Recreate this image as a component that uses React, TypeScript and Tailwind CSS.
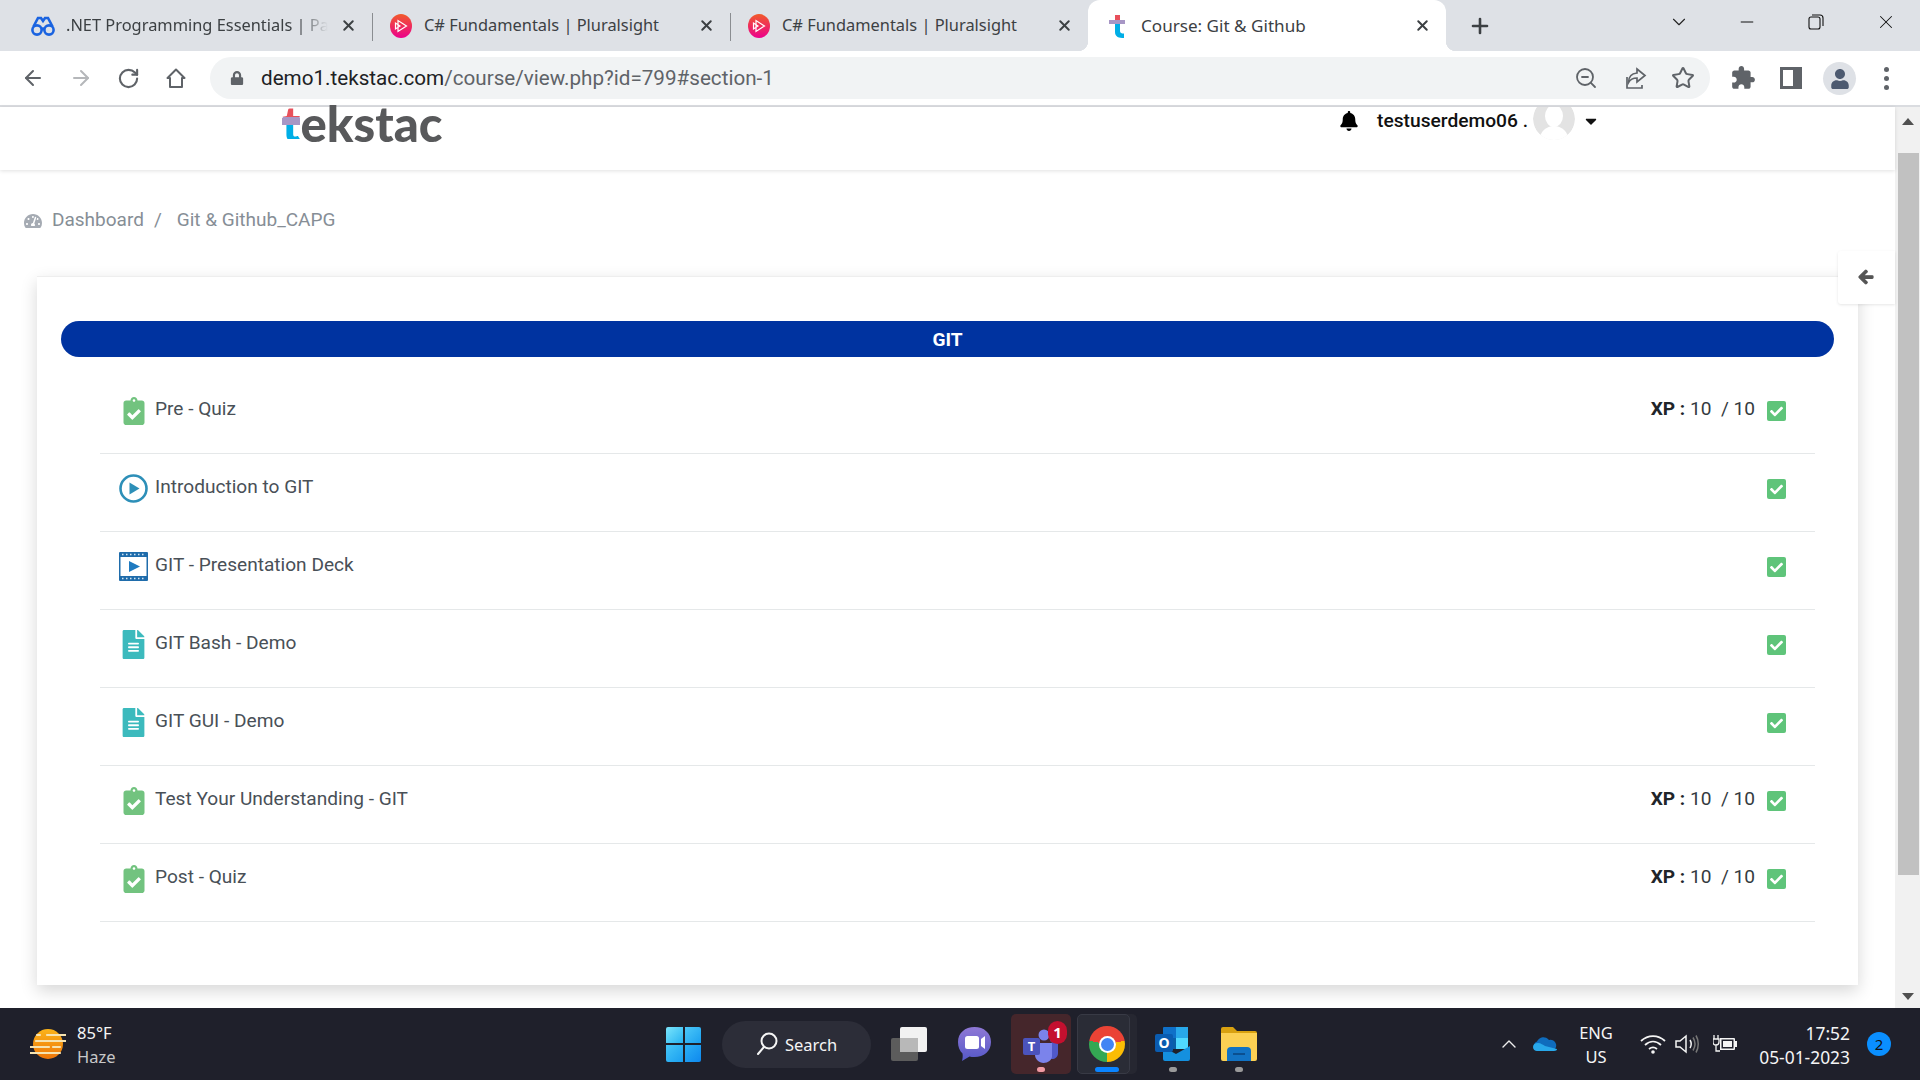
import React from 'react';
import { ArrowLeft, ArrowRight, RotateCw, ZoomOut, Star, ChevronUp, ChevronDown, Minus, X, Plus } from 'lucide-react';
import {
  FaArrowLeft,
  FaBell,
  FaCaretDown,
  FaCheck,
  FaClipboardCheck,
  FaFileAlt,
  FaLock,
  FaTachometerAlt,
  FaUser,
} from 'react-icons/fa';

const roboto = { fontFamily: 'Roboto, sans-serif' };

const GlassesIcon = () => (
  <svg width="24" height="22" viewBox="0 0 24 22" fill="none" stroke="#1a63e0" strokeWidth="2.600" className="-mx-px shrink-0">
    <circle cx="6" cy="15" r="4.600" />
    <circle cx="18" cy="15" r="4.600" />
    <path d="M10.500 14.500c1-1 2-1 3 0M2.500 11.500L7 3h3l2 3 2-3h3l4.500 8.500" />
  </svg>
);

const PluralsightIcon = () => (
  <svg width="22" height="24" viewBox="0 0 22 24" className="shrink-0">
    <defs>
      <linearGradient id="ps" x1="0" y1="0" x2="0" y2="1">
        <stop offset="0" stopColor="#f15b2a" />
        <stop offset="1" stopColor="#ec008c" />
      </linearGradient>
    </defs>
    <ellipse cx="11" cy="12" rx="11" ry="12" fill="url(#ps)" />
    <path d="M8 6.500v11l8.500-5.500zM5.500 9v6l4.500-3z" fill="none" stroke="#fff" strokeWidth="1.200" />
  </svg>
);

const TekstacIcon = () => (
  <svg width="22" height="24" viewBox="0 0 22 24" className="shrink-0">
    <path d="M8 1h5v5H8z" fill="#e8505b" />
    <path d="M8 10h5v7c0 2 1.500 2.500 4 2.500V24c-5 0-9-1-9-6z" fill="#00aee6" />
    <path d="M2 6h16v4H2z" fill="#a796c5" />
  </svg>
);

const tabs = [
  { title: '.NET Programming Essentials | Pa', icon: <GlassesIcon />, fade: true },
  { title: 'C# Fundamentals | Pluralsight', icon: <PluralsightIcon />, sep: true },
  { title: 'C# Fundamentals | Pluralsight', icon: <PluralsightIcon />, sep: true },
];

const Tab = ({ title, icon, fade, sep, active }: { title: string; icon: React.ReactNode; fade?: boolean; sep?: boolean; active?: boolean }) => (
  <div className={`relative flex h-full w-[358px] items-center gap-3 pl-[18px] pr-[15px] ${active ? 'rounded-t-[12px] bg-white' : ''}`}>
    {sep && <div className="absolute left-0 top-[13px] h-[28px] w-px bg-[#8a8d91]" />}
    {active && <div className="absolute bottom-0 -left-[10px] h-[10px] w-[10px] bg-[radial-gradient(circle_at_0_0,#dee1e6_10px,#ffffff_10.5px)]" />}
    {active && <div className="absolute bottom-0 -right-[10px] h-[10px] w-[10px] bg-[radial-gradient(circle_at_100%_0,#dee1e6_10px,#ffffff_10.5px)]" />}
    <div className={`flex w-[22px] shrink-0 justify-center ${active ? 'translate-x-[1px]' : ''}`}>{icon}</div>
    <div
      className={`min-w-0 flex-1 whitespace-nowrap font-['Noto_Sans',sans-serif] text-[#3c4043] ${active ? 'pl-px text-[17.1px]' : 'text-[16.4px]'} ${fade ? '[mask-image:linear-gradient(to_right,#000_88%,transparent_100%)]' : ''}`}
    >
      {title}
    </div>
    <X size={17} strokeWidth={2.800} color="#3c4043" className="shrink-0" />
  </div>
);

const ChromeBar = () => (
  <>
    {/* Tab strip */}
    <div className="flex h-[51px] shrink-0 items-center bg-[#dee1e6]">
      <div className="flex h-full pl-[14px]">
        {tabs.map((t, i) => (
          <Tab key={i} {...t} />
        ))}
        <Tab title="Course: Git & Github" icon={<TekstacIcon />} active />
      </div>
      <Plus size={24} strokeWidth={2.600} color="#3c4043" className="ml-[22px]" />
      <ChevronDown size={22} strokeWidth={1.200} color="#222" className="ml-[176px] -mt-2" />
      <Minus size={20} strokeWidth={1.200} color="#111" className="ml-[47px] -mt-2" />
      <svg width="16" height="16" viewBox="0 0 16 16" fill="none" stroke="#111" strokeWidth="1.100" className="ml-[51px] -mt-2">
        <rect x="1" y="3" width="11" height="12" rx="2" />
        <path d="M4 1h8c2 0 3 1 3 3v8" />
      </svg>
      <X size={22} strokeWidth={1.100} color="#111" className="ml-[51px] -mt-2" />
    </div>
    {/* Toolbar */}
    <div className="flex h-[56px] shrink-0 items-center border-b-2 border-[#dadce0] bg-white">
      <ArrowLeft size={24} strokeWidth={2} color="#5f6368" className="ml-[21px]" />
      <ArrowRight size={24} strokeWidth={2} color="#b5b7ba" className="ml-[24px]" />
      <RotateCw size={23} strokeWidth={2.200} color="#5f6368" className="ml-[24px]" />
      <svg width="24" height="24" viewBox="0 0 24 24" fill="none" stroke="#5f6368" strokeWidth="2" className="ml-[24px]">
        <path d="M12 3.500L3.500 12H6v9h12v-9h2.500z" strokeLinejoin="round" />
      </svg>
      <div className="ml-[22px] flex h-[42px] w-[1500px] items-center rounded-full bg-[#f1f3f4]">
        <FaLock size={14} color="#5f6368" className="ml-[20px]" />
        <div className="ml-[17px] whitespace-nowrap pt-[1px] text-[20.65px] text-[#5f6368]" style={roboto}>
          <span className="text-[#202124]">demo1.tekstac.com</span>/course/view.php?id=799#section-1
        </div>
        <ZoomOut size={24} strokeWidth={1.800} color="#5f6368" className="ml-auto" />
        <svg width="24" height="24" viewBox="0 0 24 24" fill="none" stroke="#5f6368" strokeWidth="1.700" className="ml-[25px]">
          <path d="M4 11v11h15v-3" />
          <path d="M14 3l8 6.500-8 6.500v-4c-4 0-6.500 1-8.500 4.500 0-5.500 3-9 8.500-9.500z" />
        </svg>
        <Star size={24} strokeWidth={2} color="#5f6368" className="ml-[24px] mr-[15px]" />
      </div>
      <svg width="26" height="26" viewBox="0 0 24 24" fill="#5f6368" className="ml-[20px]">
        <path d="M20.500 11H19V7c0-1.100-.9-2-2-2h-4V3.500C13 2.120 11.880 1 10.500 1S8 2.120 8 3.500V5H4c-1.100 0-1.990.9-1.990 2v3.800H3.500c1.490 0 2.700 1.210 2.700 2.700s-1.210 2.700-2.700 2.700H2V20c0 1.100.9 2 2 2h3.800v-1.500c0-1.490 1.210-2.700 2.700-2.700 1.490 0 2.700 1.210 2.700 2.700V22H17c1.100 0 2-.9 2-2v-4h1.500c1.380 0 2.500-1.120 2.500-2.500S21.880 11 20.500 11z" />
      </svg>
      <svg width="22" height="22" viewBox="0 0 22 22" className="ml-[24px]">
        <path d="M0 0h22v22H0z" fill="#5f6368" />
        <path d="M3 3h10v16H3z" fill="#fff" />
      </svg>
      <div className="ml-[21px] flex h-[33px] w-[33px] items-end justify-center overflow-hidden rounded-full bg-[#dee1e6] pb-[6px]">
        <FaUser size={20} color="#4d5a70" />
      </div>
      <div className="ml-[28px] flex flex-col gap-[4px]">
        <div className="h-[5px] w-[5px] rounded-full bg-[#5f6368]" />
        <div className="h-[5px] w-[5px] rounded-full bg-[#5f6368]" />
        <div className="h-[5px] w-[5px] rounded-full bg-[#5f6368]" />
      </div>
    </div>
  </>
);

const Scrollbar = () => (
  <div className="flex w-[25px] shrink-0 flex-col items-center bg-[#f1f1f1]">
    <div className="flex h-[46px] w-full items-center justify-center pb-[18px]">
      <div className="h-0 w-0 border-x-[6px] border-b-[7px] border-x-transparent border-b-[#505050]" />
    </div>
    <div className="ml-[1px] h-[722px] w-[21px] bg-[#c1c1c1]" />
    <div className="mt-auto flex h-[24px] w-full items-center justify-center">
      <div className="h-0 w-0 border-x-[6px] border-t-[7px] border-x-transparent border-t-[#505050]" />
    </div>
  </div>
);

const PlayCircle = () => (
  <svg width="29" height="29" viewBox="0 0 29 29">
    <circle cx="14.500" cy="14.500" r="13" fill="#fff" stroke="#2d8fb8" strokeWidth="2.600" />
    <path d="M10.500 8.500v12l10-6z" fill="#2d8fb8" />
  </svg>
);

const DeckIcon = () => (
  <svg width="29" height="29" viewBox="0 0 29 29">
    <rect width="29" height="29" rx="1" fill="#1f6cab" />
    <rect x="1.500" y="5" width="26" height="19" fill="#fff" />
    <path d="M3 2.500h1.500M7 2.500h1.500M11 2.500h1.500M15 2.500h1.500M19 2.500h1.500M23 2.500h1.500M3 26.500h1.500M7 26.500h1.500M11 26.500h1.500M15 26.500h1.500M19 26.500h1.500M23 26.500h1.500" stroke="#d5e7f4" strokeWidth="1.500" />
    <path d="M10 9v11l11-5.500z" fill="#1f7ac0" />
  </svg>
);

const rows = [
  { title: 'Pre - Quiz', icon: 'quiz', xp: true },
  { title: 'Introduction to GIT', icon: 'play' },
  { title: 'GIT - Presentation Deck', icon: 'deck' },
  { title: 'GIT Bash - Demo', icon: 'doc' },
  { title: 'GIT GUI - Demo', icon: 'doc' },
  { title: 'Test Your Understanding - GIT', icon: 'quiz', xp: true },
  { title: 'Post - Quiz', icon: 'quiz', xp: true },
];

const RowIcon = ({ kind }: { kind: string }) => {
  if (kind === 'quiz') return <FaClipboardCheck size={28} color="#72c37f" className="mt-px" />;
  if (kind === 'play') return <PlayCircle />;
  if (kind === 'deck') return <DeckIcon />;
  return <FaFileAlt size={29} color="#3cbabd" />;
};

const CourseRow = ({ title, icon, xp }: { title: string; icon: string; xp?: boolean }) => (
  <div className="flex h-[78px] items-start border-b border-[#e5e8e9] pt-[20px]">
    <div className="ml-[19px] flex h-[29px] w-[29px] items-start justify-center">
      <RowIcon kind={icon} />
    </div>
    <div className="ml-[7px] mt-[1px] text-[19.1px] leading-6 text-[#495057]">{title}</div>
    <div className="ml-auto mr-[29px] flex items-start">
      {xp && (
        <div className="mr-[12px] mt-[1px] whitespace-pre text-[19.1px] leading-6 text-[#343a40]">
          <span className="font-bold text-[#212529]">XP : </span>10  / 10
        </div>
      )}
      <div className="mt-[5px] flex h-[20px] w-[19px] items-center justify-center rounded-[2px] bg-[#5fc47a]">
        <FaCheck size={13} color="#fff" />
      </div>
    </div>
  </div>
);

const WebPage = () => (
  <div className="relative flex min-w-0 flex-1 flex-col bg-white" style={roboto}>
    {/* Site header */}
    <div className="flex h-[63px] shrink-0 items-start bg-white shadow-[0_1px_4px_rgba(0,0,0,0.12)]">
      <div className="relative ml-[282px] flex font-['Lato',sans-serif] text-[49px] font-black leading-[32px] text-[#58595b]">
        <span className="bg-[linear-gradient(#e8505b_0_31%,#a796c5_31%_50%,#00aee6_50%)] bg-clip-text text-transparent">t</span>
        ekstac
        <div className="absolute left-0 top-[11px] h-[7px] w-[18px] bg-[#a796c5]" />
      </div>
      <div className="ml-auto mr-[295px] flex h-[28px] items-center">
        <FaBell size={20} color="#000" />
        <span className="ml-[18px] whitespace-nowrap text-[19.2px] font-medium text-[#111]">testuserdemo06 .</span>
        {/* avatar runs under the browser toolbar, only the lower part shows */}
        <div className="ml-[5px] h-[33px] w-[42px] shrink-0 self-start overflow-hidden">
          <svg width="42" height="42" viewBox="0 0 42 42" className="-mt-[9px] rounded-full">
            <circle cx="21" cy="21" r="21" fill="#e3e3e3" />
            <ellipse cx="21" cy="18" rx="9" ry="11" fill="#fff" />
            <ellipse cx="21" cy="41" rx="14" ry="13" fill="#fff" />
          </svg>
        </div>
        <FaCaretDown size={18} color="#111" className="ml-[7px]" />
      </div>
    </div>
    {/* Breadcrumb */}
    <div className="flex h-[106px] shrink-0 items-start pt-[38px] text-[19px] leading-6 text-[#868e96]">
      <FaTachometerAlt size={18} color="#a5abb3" className="ml-[24px] mt-[4px]" />
      <span className="ml-[10px]">Dashboard</span>
      <span className="ml-[10px]">/</span>
      <span className="ml-[15px]">Git &amp; Github_CAPG</span>
    </div>
    {/* Course card */}
    <div className="ml-[37px] w-[1821px] border-t border-[#eeeeee] bg-white pb-[63px] pt-[44px] shadow-[0_6px_16px_rgba(0,0,0,0.16)]">
      <div className="mx-[24px] flex h-[36px] items-center justify-center rounded-[18px] bg-[#0033a0] pt-[2px] text-[19.1px] font-bold text-white">
        GIT
      </div>
      <div className="mx-[63px] mt-[19px] w-[1715px]">
        {rows.map((r) => (
          <CourseRow key={r.title} {...r} />
        ))}
      </div>
    </div>
    {/* Side drawer toggle */}
    <div className="absolute right-0 top-[144px] flex h-[53px] w-[57px] items-center justify-center rounded-l-[3px] bg-white pb-[2px] pr-[2px] shadow-[0_1px_3px_rgba(0,0,0,0.1)]">
      <FaArrowLeft size={16} color="#555" stroke="#555" strokeWidth={40} />
    </div>
  </div>
);

const Pill = ({ color, w }: { color: string; w: number }) => (
  <div className="absolute bottom-[2px] left-1/2 h-[5px] -translate-x-1/2 rounded-full" style={{ background: color, width: w }} />
);

const WindowsLogo = () => (
  <div className="grid h-[35px] w-[35px] shrink-0 grid-cols-2 gap-[2px]">
    <div className="rounded-tl-[2px] bg-[linear-gradient(135deg,#7be5fb,#27b3f2)]" />
    <div className="rounded-tr-[2px] bg-[linear-gradient(135deg,#4cc8f8,#1ba0f0)]" />
    <div className="rounded-bl-[2px] bg-[linear-gradient(135deg,#45c6f7,#1a9ff0)]" />
    <div className="rounded-br-[2px] bg-[linear-gradient(135deg,#2bb0f5,#0e88ee)]" />
  </div>
);

const TaskView = () => (
  <svg width="36" height="34" viewBox="0 0 36 34" className="ml-[20px] shrink-0">
    <rect x="0" y="11" width="27" height="23" rx="2" fill="#5c5c5c" />
    <rect x="9" y="0" width="27" height="25" rx="2" fill="#f2f2f2" />
    <rect x="9" y="11" width="18" height="14" fill="#b8b8b8" />
  </svg>
);

const MeetIcon = () => (
  <svg width="33" height="34" viewBox="0 0 33 34" className="ml-[31px] shrink-0">
    <defs>
      <linearGradient id="meet" x1="0" y1="0" x2="0" y2="1">
        <stop offset="0" stopColor="#8f78d6" />
        <stop offset="1" stopColor="#5558c8" />
      </linearGradient>
    </defs>
    <path d="M16.500 0C26 0 33 6 33 15s-7 15-16.500 15c-2 0-3.500 0-5 -.5L4 34c.5-2 1-5 .5-7.500C1.500 23.500 0 20 0 15 0 6 7 0 16.500 0z" fill="url(#meet)" />
    <rect x="7" y="9" width="14" height="13" rx="2.500" fill="#fff" />
    <path d="M23 12l4-3v13l-4-3z" fill="#fff" />
  </svg>
);

const TeamsIcon = () => (
  <div className="relative ml-[20px] flex h-[60px] w-[60px] shrink-0 items-center justify-center rounded-[5px] bg-[#45262b]">
    <svg width="36" height="34" viewBox="0 0 36 34" className="mt-[3px]">
      <circle cx="21" cy="6" r="5.500" fill="#7b83eb" />
      <circle cx="31" cy="10" r="4" fill="#5059c9" />
      <path d="M25 14h10v10c0 4-3 6-6 6s-4-2-4-4z" fill="#5059c9" />
      <path d="M12 14h17v13c0 4-4 7-8.500 7S12 30 12 26z" fill="#7b83eb" />
      <rect x="0" y="9" width="17" height="17" rx="2" fill="#4b53bc" />
      <text x="8.500" y="22" textAnchor="middle" fontSize="13" fontWeight="700" fill="#fff" fontFamily="Noto Sans, sans-serif">T</text>
    </svg>
    <div className="absolute left-[37px] top-[7px] flex h-[23px] w-[19px] items-center justify-center rounded-full bg-[#c4102f] text-[15px] font-bold leading-none text-white">
      1
    </div>
    <Pill color="#f09aa3" w={8} />
  </div>
);

const ChromeTask = () => (
  <div className="relative ml-[6px] flex h-[60px] w-[60px] shrink-0 items-center justify-center">
    <div className="absolute right-0 top-0 h-full w-[20px] rounded-r-[5px] bg-[#262731]" />
    <div className="absolute left-0 top-0 h-full w-[53px] rounded-[5px] border border-[#383a45] bg-[#2a2c36]" />
    <div className="relative flex h-[36px] w-[36px] items-center justify-center rounded-full bg-[conic-gradient(from_-80deg,#ea4335_0_160deg,#fbbc04_160deg_260deg,#34a853_260deg_360deg)]">
      <div className="flex h-[17px] w-[17px] items-center justify-center rounded-full bg-white">
        <div className="h-[13px] w-[13px] rounded-full bg-[#4285f4]" />
      </div>
    </div>
    <Pill color="#0a84ff" w={24} />
  </div>
);

const OutlookIcon = () => (
  <div className="relative ml-[18px] flex h-[60px] w-[35px] shrink-0 items-center justify-center">
    <svg width="35" height="34" viewBox="0 0 35 34">
      <rect x="8" y="0" width="25" height="22" rx="1" fill="#0f70c8" />
      <rect x="21" y="0" width="12" height="11" fill="#28a8ea" />
      <rect x="21" y="11" width="12" height="11" fill="#50d9ff" />
      <rect x="8" y="11" width="13" height="11" fill="#0a5fa8" />
      <path d="M8 20l13 7 14-8v13a2 2 0 0 1-2 2H10a2 2 0 0 1-2-2z" fill="#1490df" />
      <rect x="0" y="7" width="18" height="18" rx="2" fill="#0a5cb0" />
      <text x="9" y="21" textAnchor="middle" fontSize="14" fontWeight="700" fill="#fff" fontFamily="Noto Sans, sans-serif">O</text>
    </svg>
    <Pill color="#9a9a9a" w={8} />
  </div>
);

const FolderIcon = () => (
  <div className="relative ml-[31px] flex h-[60px] w-[36px] shrink-0 items-center justify-center">
    <svg width="36" height="34" viewBox="0 0 36 34">
      <path d="M0 2a2 2 0 0 1 2-2h10l4 4h18a2 2 0 0 1 2 2v4H0z" fill="#d9a110" />
      <path d="M0 6h36v26a2 2 0 0 1-2 2H2a2 2 0 0 1-2-2z" fill="#fcd053" />
      <path d="M6 34v-10a4 4 0 0 1 4-4h16a4 4 0 0 1 4 4v10z" fill="#1273c4" />
      <rect x="12" y="26" width="12" height="2" fill="#0b4f8f" />
    </svg>
    <Pill color="#9a9a9a" w={8} />
  </div>
);

const WeatherIcon = () => (
  <svg width="36" height="30" viewBox="0 0 36 30" className="shrink-0">
    <defs>
      <linearGradient id="sun" x1="0" y1="0" x2="0" y2="1">
        <stop offset="0" stopColor="#fbb41a" />
        <stop offset="1" stopColor="#ee7508" />
      </linearGradient>
    </defs>
    <circle cx="18" cy="15" r="15" fill="url(#sun)" />
    <path d="M7 6h3M17 6h19M6 12h30M0 18h19M23 18h7M0 24h30" stroke="#f6e3b0" strokeWidth="2.200" strokeLinecap="round" />
  </svg>
);

const Taskbar = () => (
  <div className="flex h-[72px] shrink-0 items-center bg-[#1f202b] font-['Noto_Sans',sans-serif] text-[#f5f5f5]">
    <div className="flex w-[666px] shrink-0 items-center pl-[30px]">
      <WeatherIcon />
      <div className="ml-[11px] mt-[2px] text-[16.5px] leading-[24px]">
        <div>85°F</div>
        <div className="text-[#c8c8c8]">Haze</div>
      </div>
    </div>
    <WindowsLogo />
    <div className="ml-[21px] flex h-[47px] w-[149px] shrink-0 items-center rounded-full bg-[#2c2d38] pl-[34px]">
      <svg width="22" height="24" viewBox="0 0 22 24" fill="none" stroke="#f5f5f5" strokeWidth="2">
        <circle cx="13" cy="9" r="7.500" />
        <path d="M8 15l-6 7" strokeLinecap="round" />
      </svg>
      <span className="ml-[7px] pt-[2px] text-[16.5px]">Search</span>
    </div>
    <TaskView />
    <MeetIcon />
    <TeamsIcon />
    <ChromeTask />
    <OutlookIcon />
    <FolderIcon />
    <ChevronUp size={24} strokeWidth={1.400} color="#eee" className="ml-[240px] shrink-0" />
    <svg width="24" height="16" viewBox="0 0 24 16" className="ml-[12px] shrink-0">
      <path d="M5 15a5 5 0 0 1-1-9.500A7 7 0 0 1 16 4a5.500 5.500 0 0 1 3 11z" fill="#0f6cbd" />
      <path d="M4 15c-2 0-4-1.500-4-4s2-4 5-4c3 0 5 2 7 3l12 3c0 1-1 2-3 2z" fill="#28a8ea" />
    </svg>
    <div className="ml-[13px] mt-[2px] w-[52px] shrink-0 text-center text-[16.5px] leading-[24px]">
      <div>ENG</div>
      <div>US</div>
    </div>
    <svg width="26" height="20" viewBox="0 0 26 20" fill="none" stroke="#f5f5f5" strokeWidth="1.800" className="ml-[18px] shrink-0">
      <path d="M1 7c7-6.500 17-6.500 24 0M5 11c5-4.500 11-4.500 16 0M9 15c2.500-2 5.500-2 8 0" />
      <circle cx="13" cy="18" r="1.800" fill="#f5f5f5" stroke="none" />
    </svg>
    <svg width="24" height="20" viewBox="0 0 24 20" fill="none" stroke="#f5f5f5" strokeWidth="1.500" className="ml-[9px] shrink-0">
      <path d="M1 7v6h4l6 5V2L5 7z" />
      <path d="M15 6c1.500 2.500 1.500 5.500 0 8" />
      <path d="M18 3.500c2.500 4 2.500 9 0 13M21 1.500c3 5 3 12 0 17" stroke="#777" />
    </svg>
    <svg width="24" height="20" viewBox="0 0 24 20" className="ml-[14px] shrink-0">
      <path d="M7 4h14a1 1 0 0 1 1 1v2h2v6h-2v2a1 1 0 0 1-1 1H7z" fill="#f5f5f5" />
      <rect x="8.500" y="5.500" width="12" height="9" fill="#1f202b" />
      <rect x="10" y="7" width="9" height="6" fill="#f5f5f5" />
      <path d="M1 1v4M5 1v4M0 5h6v3c0 2-1 3-3 3s-3-1-3-3zM3 11v6h4" stroke="#f5f5f5" strokeWidth="1.300" fill="none" />
    </svg>
    <div className="ml-[13px] mt-[1px] w-[100px] shrink-0 whitespace-nowrap text-right text-[17.4px] leading-[24px]">
      <div>17:52</div>
      <div>05-01-2023</div>
    </div>
    <div className="ml-[17px] flex h-[24px] w-[24px] shrink-0 items-center justify-center rounded-full bg-[#0a8fff] text-[15px] text-[#111]">
      2
    </div>
  </div>
);

const App: React.FC = () => {
  return (
    <div className="flex h-screen w-[1920px] flex-col overflow-hidden bg-white">
      <ChromeBar />
      <div className="flex min-h-0 flex-1">
        <WebPage />
        <Scrollbar />
      </div>
      <Taskbar />
    </div>
  );
};

export default App;
